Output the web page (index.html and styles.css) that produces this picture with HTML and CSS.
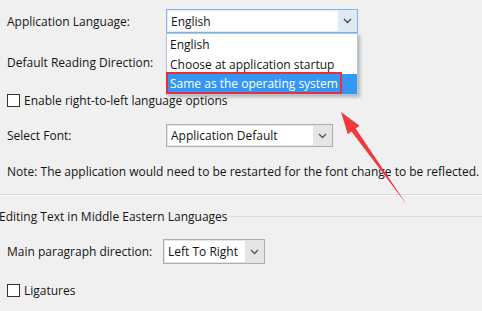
FILE: index.html
```html
<!DOCTYPE html>
<html>
<head>
<meta charset="utf-8">
<link rel="stylesheet" href="styles.css">
</head>
<body>
<div class="page">
  <div class="row row-lang">
    <span class="label">Application Language:</span>
    <div class="combo combo-focus combo-lang">
      <span class="field">English</span>
      <span class="btn"><svg width="9" height="6" viewBox="0 0 9 6"><path d="M1 1 L4.5 4.5 L8 1" fill="none" stroke="#444" stroke-width="1.3"/></svg></span>
      <div class="popup">
        <div class="item">English</div>
        <div class="item">Choose at application startup</div>
        <div class="item item-sel">Same as the operating system</div>
        <div class="redbox"></div>
      </div>
    </div>
  </div>
  <div class="row row-dir">
    <span class="label">Default Reading Direction:</span>
  </div>
  <div class="row row-check">
    <span class="checkbox"></span>
    <span>Enable right-to-left language options</span>
  </div>
  <div class="row row-font">
    <span class="label">Select Font:</span>
    <div class="combo combo-font">
      <span class="field">Application Default</span>
      <span class="btn"><svg width="9" height="6" viewBox="0 0 9 6"><path d="M1 1 L4.5 4.5 L8 1" fill="none" stroke="#555" stroke-width="1.3"/></svg></span>
    </div>
  </div>
  <p class="note">Note: The application would need to be restarted for the font change to be reflected.</p>
  <div class="sep"></div>
  <div class="group-title">
    <span>Editing Text in Middle Eastern Languages</span>
    <span class="group-line"></span>
  </div>
  <div class="row row-para">
    <span class="label label-para">Main paragraph direction:</span>
    <div class="combo combo-para">
      <span class="field">Left To Right</span>
      <span class="btn"><svg width="9" height="6" viewBox="0 0 9 6"><path d="M1 1 L4.5 4.5 L8 1" fill="none" stroke="#555" stroke-width="1.3"/></svg></span>
    </div>
  </div>
  <div class="row row-lig">
    <span class="checkbox"></span>
    <span>Ligatures</span>
  </div>
</div>
<svg class="arrow" width="482" height="311" viewBox="0 0 482 311">
  <path d="M407 205 L351.5 131.6 L347.8 134.2 L341 112 L359.6 125.8 L355.7 128.6 Z" fill="#f0393d"/>
</svg>
</body>
</html>
```

FILE: styles.css
```css
html, body {
  margin: 0;
  padding: 0;
  background: #f0f0f0;
}
body {
  width: 482px;
  height: 311px;
  overflow: hidden;
  position: relative;
  font-family: "Open Sans", "Noto Sans", sans-serif;
  font-size: 12px;
  color: #141414;
}
.page {
  padding-left: 7px;
}
.row {
  display: flex;
  align-items: center;
}
.label {
  width: 159px;
  flex: none;
}
.row-lang { margin-top: 9px; height: 24px; }
.row-dir { margin-top: 17px; height: 24px; }
.row-check { margin-top: 19px; height: 14px; gap: 4px; }
.row-font { margin-top: 17px; height: 23px; }
.row-para { margin-top: 15px; height: 25px; }
.row-lig { margin-top: 19px; height: 14px; gap: 4px; }
.label-para { width: 156px; }

.checkbox {
  width: 11px;
  height: 11px;
  border: 1px solid #333;
  background: #fff;
  flex: none;
}

.combo {
  position: relative;
  box-sizing: border-box;
  height: 100%;
  display: flex;
  border: 1px solid #adadad;
  background: #e5e5e5;
  padding: 1px;
}
.combo .field {
  flex: 1;
  background: #fff;
  display: flex;
  align-items: center;
  padding-left: 3px;
}
.combo .btn {
  width: 18px;
  display: flex;
  align-items: center;
  justify-content: center;
  flex: none;
}
.combo-lang {
  width: 192px;
  border-color: #7eb4ea;
  background: #dfeaf6;
}
.combo-font { width: 167px; }
.combo-para { width: 102px; }

.popup {
  position: absolute;
  left: -1px;
  top: 23px;
  width: 192px;
  box-sizing: border-box;
  height: 62px;
  background: #fff;
  border: 1px solid #a9c7e6;
  padding-top: 1px;
  box-shadow: 2px 2px 3px rgba(0,0,0,0.25);
  z-index: 2;
}
.item {
  height: 19.5px;
  line-height: 19.5px;
  padding-left: 3px;
  white-space: nowrap;
}
.item-sel {
  background: #3497f3;
  color: #fff;
}
.redbox {
  position: absolute;
  left: -1px;
  top: 38px;
  width: 176px;
  height: 22px;
  box-sizing: border-box;
  border: 2px solid #ec2e37;
}

.note {
  margin: 17px 0 0;
  height: 16px;
  line-height: 16px;
  white-space: nowrap;
}
.sep {
  margin: 14px 0 0 -7px;
  height: 0;
  border-top: 1px solid #dadada;
  border-bottom: 1px solid #fafafa;
}
.group-title {
  margin: 12px 0 0 -8px;
  height: 16px;
  display: flex;
  align-items: center;
  white-space: nowrap;
}
.group-line {
  flex: 1;
  margin-left: 2px;
  border-top: 1px solid #dadada;
}

.arrow {
  position: absolute;
  left: 0;
  top: 0;
  pointer-events: none;
}
```
